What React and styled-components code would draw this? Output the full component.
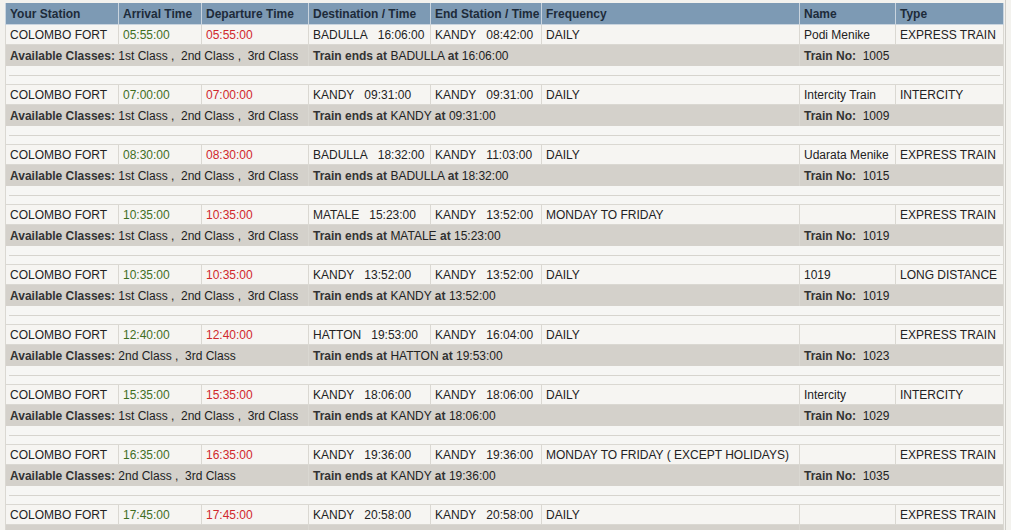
import React from 'react'
import styled, { createGlobalStyle } from 'styled-components'

const GlobalStyle = createGlobalStyle`
body {
  margin:0;
  background:#f3f2ee;
  font-family:"Liberation Sans", Arial, sans-serif;
  font-size:12px;
  color:#222;
  overflow:hidden;
}
`

const Page = styled.div`
width:1006px;
min-height:530px;
border-right:1px solid #cfcdc8;
padding:3px 0 0 5px;
box-sizing:border-box;
`

const Table = styled.table`
width:998px;
table-layout:fixed;
border-collapse:collapse;
`

const HeadCell = styled.th`
background:#7d9ab4;
color:#1d2b3a;
font-weight:bold;
text-align:left;
padding:0 4px;
height:21px;
border:1px solid #c9d4de;
border-top:none;
white-space:nowrap;
`

const Cell = styled.td`
background:#f6f5f2;
border:1px solid #dad8d2;
padding:0 4px;
height:19px;
white-space:nowrap;
color:${props => props.color || '#222'};
`

const DetailCell = styled.td`
background:#d4d1cb;
padding:0 4px;
height:21px;
white-space:nowrap;
border-left:1px solid #dad8d2;
border-right:1px solid #dad8d2;
`

const SpacerCell = styled.td`
background:#f6f6f4;
height:18px;
padding:0 3px;
border-left:1px solid #dad8d2;
border-right:1px solid #dad8d2;
`

const Rule = styled.div`
height:1px;
background:#d6d4ce;
`

const B = styled.b`
font-weight:bold;
color:#333;
`

const cols = [113, 83, 107, 122, 111, 258, 96, 108]
const heads = ['Your Station', 'Arrival Time', 'Departure Time', 'Destination / Time', 'End Station / Time', 'Frequency', 'Name', 'Type']

const all = ['1st Class', '2nd Class', '3rd Class']
const two = ['2nd Class', '3rd Class']

const trains = [
  { t: '05:55:00', dest: 'BADULLA', dt: '16:06:00', end: 'KANDY', et: '08:42:00', freq: 'DAILY', name: 'Podi Menike', type: 'EXPRESS TRAIN', cls: all, no: '1005' },
  { t: '07:00:00', dest: 'KANDY', dt: '09:31:00', end: 'KANDY', et: '09:31:00', freq: 'DAILY', name: 'Intercity Train', type: 'INTERCITY', cls: all, no: '1009' },
  { t: '08:30:00', dest: 'BADULLA', dt: '18:32:00', end: 'KANDY', et: '11:03:00', freq: 'DAILY', name: 'Udarata Menike', type: 'EXPRESS TRAIN', cls: all, no: '1015' },
  { t: '10:35:00', dest: 'MATALE', dt: '15:23:00', end: 'KANDY', et: '13:52:00', freq: 'MONDAY TO FRIDAY', name: '', type: 'EXPRESS TRAIN', cls: all, no: '1019' },
  { t: '10:35:00', dest: 'KANDY', dt: '13:52:00', end: 'KANDY', et: '13:52:00', freq: 'DAILY', name: '1019', type: 'LONG DISTANCE', cls: all, no: '1019' },
  { t: '12:40:00', dest: 'HATTON', dt: '19:53:00', end: 'KANDY', et: '16:04:00', freq: 'DAILY', name: '', type: 'EXPRESS TRAIN', cls: two, no: '1023' },
  { t: '15:35:00', dest: 'KANDY', dt: '18:06:00', end: 'KANDY', et: '18:06:00', freq: 'DAILY', name: 'Intercity', type: 'INTERCITY', cls: all, no: '1029' },
  { t: '16:35:00', dest: 'KANDY', dt: '19:36:00', end: 'KANDY', et: '19:36:00', freq: 'MONDAY TO FRIDAY ( EXCEPT HOLIDAYS)', name: '', type: 'EXPRESS TRAIN', cls: two, no: '1035' },
  { t: '17:45:00', dest: 'KANDY', dt: '20:58:00', end: 'KANDY', et: '20:58:00', freq: 'DAILY', name: '', type: 'EXPRESS TRAIN', cls: all, no: '1039' },
]

const gap = '\u00a0\u00a0 '

const TrainRows = ({ tr, last }) => (
  <>
    <tr>
      <Cell>COLOMBO FORT</Cell>
      <Cell color="#3f6e1f">{tr.t}</Cell>
      <Cell color="#d0282c">{tr.t}</Cell>
      <Cell>{tr.dest}{gap}{tr.dt}</Cell>
      <Cell>{tr.end}{gap}{tr.et}</Cell>
      <Cell>{tr.freq}</Cell>
      <Cell>{tr.name}</Cell>
      <Cell>{tr.type}</Cell>
    </tr>
    <tr>
      <DetailCell colSpan={3}><B>Available Classes:</B> {tr.cls.join(' ,\u00a0 ')}</DetailCell>
      <DetailCell colSpan={3}><B>Train ends at</B> {tr.dest} <B>at</B> {tr.dt}</DetailCell>
      <DetailCell colSpan={2}><B>Train No:</B>{'\u00a0 '}{tr.no}</DetailCell>
    </tr>
    {!last && (
      <tr>
        <SpacerCell colSpan={8}><Rule /></SpacerCell>
      </tr>
    )}
  </>
)

const App = () => {
  return (
    <Page>
      <GlobalStyle />
      <Table>
        <colgroup>
          {cols.map((w, i) => <col key={i} style={{ width: w }} />)}
        </colgroup>
        <thead>
          <tr>
            {heads.map(h => <HeadCell key={h}>{h}</HeadCell>)}
          </tr>
        </thead>
        <tbody>
          {trains.map((tr, i) => <TrainRows key={i} tr={tr} last={i === trains.length - 1} />)}
        </tbody>
      </Table>
    </Page>
  )
}

export default App
